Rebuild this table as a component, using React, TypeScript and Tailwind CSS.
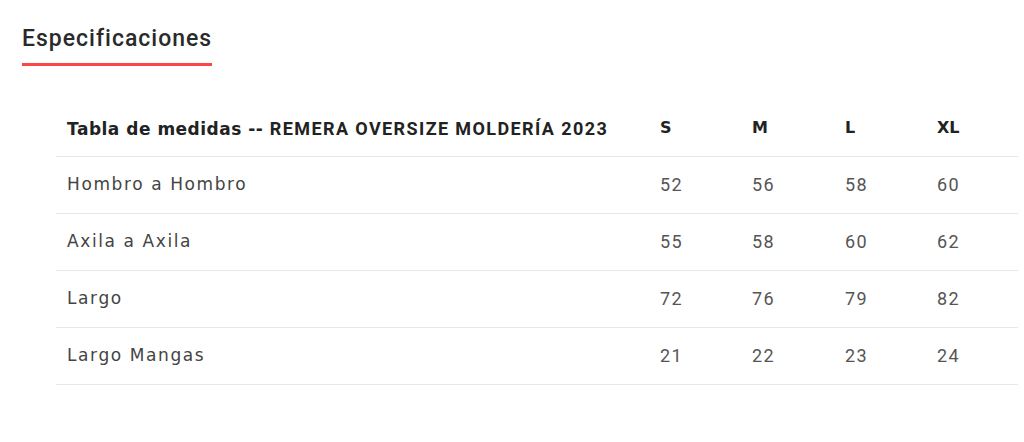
const sizes = ["S", "M", "L", "XL"]

const rows = [
	{ label: "Hombro a Hombro", values: [52, 56, 58, 60] },
	{ label: "Axila a Axila", values: [55, 58, 60, 62] },
	{ label: "Largo", values: [72, 76, 79, 82] },
	{ label: "Largo Mangas", values: [21, 22, 23, 24] },
]

const App = () => {
	return (
		<div className="w-[1024px] h-[442px] bg-white overflow-hidden">
			<div className="pl-[22px] pt-[24px]">
				<h2 className="inline-block pb-[9px] border-b-[3px] border-[#fb4646] text-[23px] leading-[30px] font-medium tracking-[1px] text-[#2a2a2a] font-['Roboto',sans-serif]">
					Especificaciones
				</h2>
			</div>
			<div className="pl-[56px] pr-[6px] pt-[33px]">
				<table className="w-full border-collapse table-fixed">
					<colgroup>
						<col className="w-[592px]" />
						<col className="w-[92px]" />
						<col className="w-[93px]" />
						<col className="w-[92px]" />
						<col />
					</colgroup>
					<thead>
						<tr className="h-[57px] border-b border-[#e3e7ee]">
							<th className="text-left pl-[11px] pt-[2px] font-bold text-[#222] whitespace-nowrap">
								<span className="font-['DejaVu_Sans',sans-serif] text-[17px] tracking-[0.5px]">Tabla de medidas -- </span>
								<span className="font-['Roboto',sans-serif] text-[18px] tracking-[1.4px]">REMERA OVERSIZE MOLDERÍA 2023</span>
							</th>
							{sizes.map((s) => (
								<th key={s} className="text-left pl-[12px] pt-[2px] text-[16px] font-bold text-[#222] font-['DejaVu_Sans',sans-serif]">
									{s}
								</th>
							))}
						</tr>
					</thead>
					<tbody>
						{rows.map((r) => (
							<tr key={r.label} className="h-[57px] border-b border-[#e3e7ee]">
								<td className="pl-[11px] text-[17px] text-[#444] font-['DejaVu_Sans',sans-serif] tracking-[1.6px]">
									{r.label}
								</td>
								{r.values.map((v, i) => (
									<td key={i} className="pl-[12px] text-[18px] text-[#555] font-['Roboto',sans-serif] tracking-[1.5px]">
										{v}
									</td>
								))}
							</tr>
						))}
					</tbody>
				</table>
			</div>
		</div>
	)
}

export default App
